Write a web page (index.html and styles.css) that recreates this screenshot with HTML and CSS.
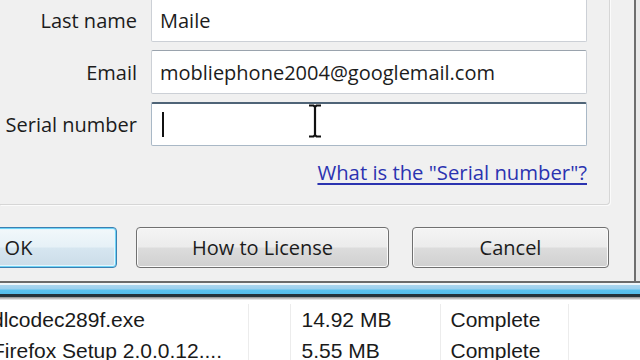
FILE: index.html
```html
<!DOCTYPE html>
<html lang="en">
<head>
    <meta charset="UTF-8">
    <title>Register</title>
    <link rel="stylesheet" href="styles.css">
</head>
<body>

    <!-- Registration dialog -->
    <div class="window">
        <div class="dialog">
            <section class="panel">
                <div class="form">
                    <label class="label">Last name</label>
                    <div class="field">Maile</div>

                    <label class="label">Email</label>
                    <div class="field">mobliephone2004@googlemail.com</div>

                    <label class="label">Serial number</label>
                    <div class="field focused"><span class="caret"></span></div>
                </div>
                <div class="help">
                    <a href="#">What is the "Serial number"?</a>
                </div>
            </section>

            <div class="buttons">
                <button class="btn ok">OK</button>
                <button class="btn license">How to License</button>
                <button class="btn cancel">Cancel</button>
            </div>
        </div>
        <div class="frame-edge"></div>
    </div>
    <div class="glass"></div>

    <!-- Download list behind the dialog -->
    <table class="list">
        <tr>
            <td class="c-name">dlcodec289f.exe</td>
            <td class="c-gap"></td>
            <td class="c-size">14.92 MB</td>
            <td class="c-status">Complete</td>
            <td class="c-rest"></td>
        </tr>
        <tr>
            <td class="c-name">Firefox Setup 2.0.0.12....</td>
            <td class="c-gap"></td>
            <td class="c-size">5.55 MB</td>
            <td class="c-status">Complete</td>
            <td class="c-rest"></td>
        </tr>
    </table>

    <!-- mouse pointer -->
    <svg class="ibeam" width="16" height="34" viewBox="0 0 16 34">
        <path d="M2 1.5h4.5l1.5 1.5l1.5-1.5H14M8 3v28M2 32.5h4.5l1.5-1.5l1.5 1.5H14" fill="none" stroke="#111" stroke-width="2.2"/>
    </svg>

</body>
</html>
```

FILE: styles.css
```css
/* Vista style dialog */
body {
    margin: 0;
    width: 640px;
    height: 360px;
    overflow: hidden;
    position: relative;
    background-color: #fff;
    font-family: "Open Sans", "Noto Sans", sans-serif;
    color: #1c1c1c;
}

.window {
    display: flex;
    height: 281px;
    border-bottom: 2px solid #6b6b6b;
}

.dialog {
    width: 634px;
    background-color: #f0f0f0;
    display: flex;
    flex-direction: column;
}

/* Inner panel */
.panel {
    width: 609px;
    margin-top: -2px;
    padding-bottom: 16px;
    border-right: 1px solid #d6d6d6;
    border-bottom: 1px solid #d6d6d6;
    border-bottom-right-radius: 4px;
    box-shadow: 1px 1px 0 #fbfbfb;
}

.form {
    display: grid;
    grid-template-columns: 137px 436px;
    grid-auto-rows: 44px;
    column-gap: 14px;
    row-gap: 8px;
}

.label {
    font-size: 20px;
    text-align: right;
    align-self: center;
}

.field {
    box-sizing: border-box;
    background-color: #fff;
    border: 1px solid #ccd0d6;
    border-top-color: #9aa3ad;
    border-radius: 2px;
    padding-left: 8px;
    font-size: 20px;
    display: flex;
    align-items: center;
}

.field.focused {
    border-color: #a9b8c6;
    border-top: 2px solid #4f6477;
    padding-left: 10px;
}

.caret {
    display: inline-block;
    width: 2px;
    height: 25px;
    background-color: #111;
}

.help {
    margin-top: 12px;
    width: 587px;
    text-align: right;
    line-height: 28px;
}

.help a {
    font-size: 20.3px;
    color: #2b33b0;
    text-decoration: underline;
    text-decoration-thickness: 2px;
    text-underline-offset: 3px;
}

/* Buttons */
.buttons {
    display: flex;
    margin-top: 22px;
    margin-left: -80px;
}

.btn {
    height: 41px;
    box-sizing: border-box;
    border: 1px solid #707070;
    border-radius: 4px;
    box-shadow: inset 0 0 0 1px #fafafa;
    background: linear-gradient(#f4f4f4 0%, #ececec 48%, #dcdcdc 52%, #d0d0d0 100%);
    font-family: "Open Sans", "Noto Sans", sans-serif;
    font-size: 20px;
    color: #1c1c1c;
    padding: 0;
}

.ok {
    width: 197px;
    border-color: #3c7fb1;
    box-shadow: inset 0 0 0 1px #6fd3f6, inset 0 0 0 2px #e4f6fd;
    background: linear-gradient(#f2f8fb 0%, #e6f1f7 48%, #d6e6f0 52%, #cbdce8 100%);
}

.license {
    width: 253px;
    margin-left: 19px;
}

.cancel {
    width: 197px;
    margin-left: 23px;
}

.frame-edge {
    width: 4px;
    border-left: 2px solid #6e6e6e;
    background-color: #e9e9e9;
}

/* Window glass edge */
.glass {
    height: 17px;
    background: linear-gradient(#eef6fa 0px, #eef6fa 2px, #aad6ef 2px, #9bd0ee 6px, #5cc2ee 7px, #55bdea 11px, #25333b 11px, #25333b 14px, #8a8a8a 14px, #f4f4f4 17px);
}

/* List */
.list {
    table-layout: fixed;
    width: 648px;
    margin-left: -8px;
    margin-top: 4px;
    border-collapse: collapse;
    font-family: "Liberation Sans", Arial, sans-serif;
    font-size: 21px;
    color: #1a1a1a;
}

.list td {
    box-sizing: border-box;
    height: 31px;
    padding: 0;
    white-space: nowrap;
    overflow: hidden;
    border-right: 1px solid #ececec;
}

.list td.c-rest {
    border-right: none;
}

.c-name {
    width: 256px;
}

.c-gap {
    width: 42px;
}

.c-size {
    width: 150px;
    padding-left: 11px !important;
}

.c-status {
    width: 128px;
    padding-left: 10px !important;
}

.c-rest {
    width: 72px;
}

.ibeam {
    position: absolute;
    left: 307px;
    top: 104px;
}
```
